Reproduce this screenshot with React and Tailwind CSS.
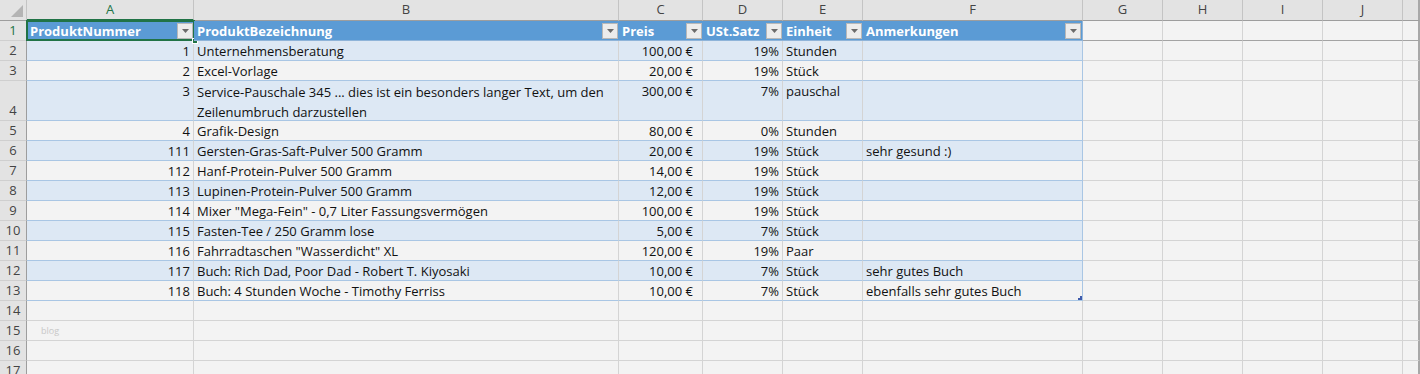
import React from "react";

const FONT = { fontFamily: "'Open Sans', 'Noto Sans', sans-serif" };

const rows = [
  [1, "Unternehmensberatung", "100,00 €", "19%", "Stunden", ""],
  [2, "Excel-Vorlage", "20,00 €", "19%", "Stück", ""],
  [3, "Service-Pauschale 345 ... dies ist ein besonders langer Text, um den Zeilenumbruch darzustellen", "300,00 €", "7%", "pauschal", ""],
  [4, "Grafik-Design", "80,00 €", "0%", "Stunden", ""],
  [111, "Gersten-Gras-Saft-Pulver 500 Gramm", "20,00 €", "19%", "Stück", "sehr gesund :)"],
  [112, "Hanf-Protein-Pulver 500 Gramm", "14,00 €", "19%", "Stück", ""],
  [113, "Lupinen-Protein-Pulver 500 Gramm", "12,00 €", "19%", "Stück", ""],
  [114, 'Mixer "Mega-Fein" - 0,7 Liter Fassungsvermögen', "100,00 €", "19%", "Stück", ""],
  [115, "Fasten-Tee / 250 Gramm lose", "5,00 €", "7%", "Stück", ""],
  [116, 'Fahrradtaschen "Wasserdicht" XL', "120,00 €", "19%", "Paar", ""],
  [117, "Buch: Rich Dad, Poor Dad - Robert T. Kiyosaki", "10,00 €", "7%", "Stück", "sehr gutes Buch"],
  [118, "Buch: 4 Stunden Woche - Timothy Ferriss", "10,00 €", "7%", "Stück", "ebenfalls sehr gutes Buch"],
];

const GRID = "grid grid-cols-[27px_167px_425px_84px_80px_80px_220px_80px_80px_80px_80px_17px]";

function FilterBtn() {
  return (
    <div className="w-[16px] h-[16px] shrink-0 bg-[#ececec] border border-[#b8b8b8] flex items-center justify-center">
      <svg width="7" height="4" viewBox="0 0 7 4">
        <path d="M0 0 H7 L3.5 4 Z" fill="#6b6b6b" />
      </svg>
    </div>
  );
}

function RowHead({ n, h = "h-[20px]", active = false }) {
  return (
    <div
      className={`${h} border-r border-b border-r-[#9d9d9d] border-b-[#cfcfcf] bg-[#e3e3e3] flex items-end justify-center text-[13px] leading-[20px] ${
        active ? "text-[#217346] border-r-[#217346]" : "text-[#444]"
      }`}
    >
      {n}
    </div>
  );
}

function EmptyOutside({ h = "h-[20px]", last = false, darkBottom = false }) {
  return (
    <div
      className={`${h} border-b ${darkBottom ? "border-b-[#a3a3a3]" : "border-b-[#d4d4d4]"} ${
        last ? "border-r-2 border-r-[#a8a8a8]" : "border-r border-r-[#d4d4d4]"
      }`}
    />
  );
}

export default function App() {
  const letters = ["A", "B", "C", "D", "E", "F", "G", "H", "I", "J"];
  return (
    <div className="w-[1420px] h-[374px] overflow-hidden bg-[#f3f3f3] text-[#111]" style={FONT}>
      {/* Column letters */}
      <div className={GRID}>
        <div className="h-[21px] bg-[#e3e3e3] border-r border-b border-r-[#c4c4c4] border-b-[#9d9d9d] relative">
          <svg className="absolute right-[3px] bottom-[3px]" width="12" height="12" viewBox="0 0 12 12">
            <path d="M12 0 V12 H0 Z" fill="#b4b4b4" />
          </svg>
        </div>
        {letters.map((l, i) => (
          <div
            key={l}
            className={`h-[21px] bg-[#e3e3e3] border-r border-r-[#c4c4c4] flex items-center justify-center text-[13px] ${
              i === 0 ? "border-b-2 border-b-[#217346] text-[#217346]" : "border-b border-b-[#9d9d9d] text-[#444]"
            }`}
          >
            {l}
          </div>
        ))}
        <div className="h-[21px] bg-[#e3e3e3] border-b border-b-[#9d9d9d] border-r-2 border-r-[#a8a8a8]" />
      </div>

      {/* Row 1: table header */}
      <div className={GRID}>
        <RowHead n={1} active />
        {["ProduktNummer", "ProduktBezeichnung", "Preis", "USt.Satz", "Einheit", "Anmerkungen"].map((t, i) => (
          <div
            key={t}
            className={`h-[20px] bg-[#5b9bd5] border-b border-b-[#8fb4d9] flex items-center justify-between pl-[3px] pr-[1px] text-white font-bold text-[13px] relative ${
              i === 5 ? "border-r border-r-[#8fb4d9]" : ""
            }`}
          >
            <span className="leading-[20px] pt-[1px] whitespace-nowrap">{t}</span>
            <FilterBtn />
            {i === 0 && (
              <>
                <div className="absolute -left-[1px] -top-[1px] -right-[1px] -bottom-[1px] border-2 border-[#217346] pointer-events-none" />
                <div className="absolute -right-[4px] -bottom-[4px] w-[6px] h-[6px] bg-[#217346] border border-white" />
              </>
            )}
          </div>
        ))}
        <EmptyOutside darkBottom />
        <EmptyOutside darkBottom />
        <EmptyOutside darkBottom />
        <EmptyOutside darkBottom />
        <EmptyOutside darkBottom last />
      </div>

      {/* Data rows */}
      {rows.map((r, idx) => {
        const rowNo = idx + 2;
        const band = rowNo % 2 === 0;
        const tall = rowNo === 4;
        const h = tall ? "h-[40px]" : "h-[20px]";
        const bg = band ? "bg-[#dde8f4]" : "";
        const cell = `${h} ${bg} border-b border-b-[#a9c6e4] text-[13px] leading-[21px] overflow-hidden whitespace-nowrap`;
        const wrapCell = `${h} ${bg} border-b border-b-[#a9c6e4] text-[13px] leading-[20px] pt-[1px] overflow-hidden whitespace-normal`;
        return (
          <div key={rowNo} className={GRID}>
            <RowHead n={rowNo} h={h} />
            <div className={`${cell} border-r border-r-[#d4d4d4] text-right pr-[3px]`}>{r[0]}</div>
            <div className={`${tall ? wrapCell : cell} border-r border-r-[#d4d4d4] pl-[3px]`}>{r[1]}</div>
            <div className={`${cell} border-r border-r-[#d4d4d4] text-right pr-[9px]`}>{r[2]}</div>
            <div className={`${cell} border-r border-r-[#d4d4d4] text-right pr-[3px]`}>{r[3]}</div>
            <div className={`${cell} border-r border-r-[#d4d4d4] pl-[3px]`}>{r[4]}</div>
            <div className={`${cell} border-r border-r-[#a9c6e4] pl-[3px] relative`}>
              {r[5]}
              {rowNo === 13 && (
                <svg className="absolute right-0 bottom-0" width="4" height="4" viewBox="0 0 4 4">
                  <path d="M4 0 V4 H0 V2 H2 V0 Z" fill="#3f5bab" />
                </svg>
              )}
            </div>
            <EmptyOutside h={h} />
            <EmptyOutside h={h} />
            <EmptyOutside h={h} />
            <EmptyOutside h={h} />
            <EmptyOutside h={h} last />
          </div>
        );
      })}

      {/* Empty rows */}
      {[14, 15, 16, 17].map((n) => (
        <div key={n} className={GRID}>
          <RowHead n={n} />
          <div className="h-[20px] border-r border-b border-[#d4d4d4] relative">
            {n === 15 && (
              <span className="absolute left-[14px] top-[3px] text-[9px] text-[#c8c8c8]">blog</span>
            )}
          </div>
          {Array.from({ length: 9 }).map((_, i) => (
            <EmptyOutside key={i} />
          ))}
          <EmptyOutside last />
        </div>
      ))}
    </div>
  );
}
